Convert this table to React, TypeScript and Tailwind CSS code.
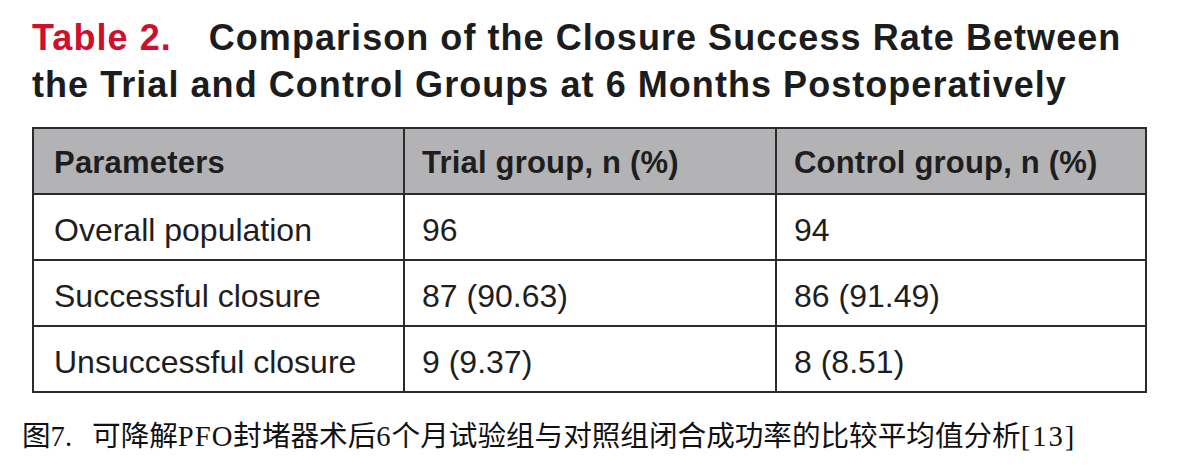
import React from "react";

const rows = [
  ["Overall population", "96", "94"],
  ["Successful closure", "87 (90.63)", "86 (91.49)"],
  ["Unsuccessful closure", "9 (9.37)", "8 (8.51)"],
];

export default function App() {
  return (
    <div className="w-[1184px] h-[471px] bg-white overflow-hidden">
      <div
        className="pl-[32px] pt-[14px] text-[36px] leading-[47px] font-bold text-[#1c1c1c] tracking-[1.05px]"
        style={{ fontFamily: '"Liberation Sans", Arial, sans-serif' }}
      >
        <div className="whitespace-nowrap">
          <span className="text-[#d0102a] mr-[37px]">Table 2.</span>
          Comparison of the Closure Success Rate Between
        </div>
        <div className="whitespace-nowrap">the Trial and Control Groups at 6 Months Postoperatively</div>
      </div>
      <div
        className="ml-[32px] mt-[19px] w-[1115px] border-l-2 border-t-2 border-[#2b2b2b] grid grid-cols-[371px_372px_370px] text-[#1e1e1e]"
        style={{ fontFamily: '"Liberation Sans", Arial, sans-serif' }}
      >
        {["Parameters", "Trial group, n (%)", "Control group, n (%)"].map((h, i) => (
          <div
            key={h}
            className={`h-[66px] pt-[5px] bg-[#b3b3b5] border-r-2 border-b-2 border-[#2b2b2b] flex items-center font-bold text-[31px] tracking-[0.2px] ${i === 0 ? "pl-[20px]" : "pl-[17px]"}`}
          >
            {h}
          </div>
        ))}
        {rows.map((r) =>
          r.map((c, i) => (
            <div
              key={r[0] + i}
              className={`h-[66px] pt-[5px] bg-white border-r-2 border-b-2 border-[#2b2b2b] flex items-center text-[32px] ${i === 0 ? "pl-[20px]" : "pl-[17px]"}`}
            >
              {c}
            </div>
          ))
        )}
      </div>
      <div
        className="pl-[22px] mt-[27px] text-[28.6px] leading-[34px] text-[#111] whitespace-nowrap"
        style={{ fontFamily: '"Liberation Serif", "Noto Sans CJK SC", serif' }}
      >
        图7.<span className="ml-[20px]">可降解</span>
        <span className="tracking-[1px]">PFO</span>封堵器术后<span className="tracking-[1px]">6</span>
        个月试验组与对照组闭合成功率的比较平均值分析<span className="tracking-[2px]">[13]</span>
      </div>
    </div>
  );
}
